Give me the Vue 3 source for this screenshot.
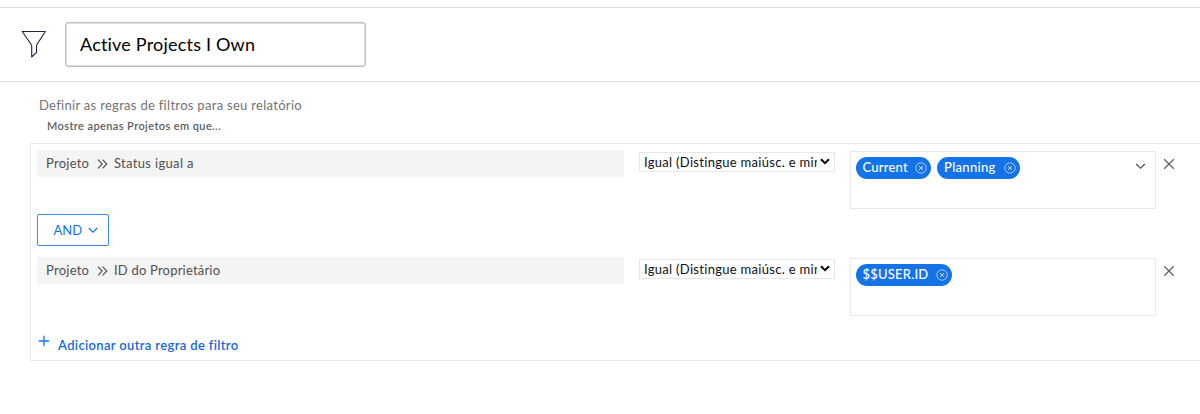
<script setup>
const rules = [
  { field: 'Status igual a', kind: 'status', values: [{ text: 'Current', kind: 'current' }, { text: 'Planning', kind: 'planning' }], menu: true },
  { field: 'ID do Proprietário', kind: 'owner', values: [{ text: '$$USER.ID', kind: 'user' }], menu: false },
]
</script>

<template>
  <main class="page">
    <header class="header">
      <svg class="funnel" width="26" height="29" viewBox="0 0 26 29">
        <path d="M1.2 1.5H24.3L15.5 15.3V22.4L10.7 27V15.3Z" fill="none" stroke="#22243a" stroke-width="1.1" stroke-linejoin="round" />
      </svg>
      <div class="name"><span class="t-name">Active Projects I Own</span></div>
    </header>

    <div class="intro"><span class="t-intro">Definir as regras de filtros para seu relatório</span></div>
    <div class="hint"><span class="t-hint">Mostre apenas Projetos em que...</span></div>

    <section class="panel">
      <template v-for="(rule, i) in rules" :key="rule.kind">
        <div class="rule">
          <div class="field">
            <span class="t-project">Projeto</span>
            <svg class="guillemet" width="11" height="10" viewBox="0 0 11 10">
              <path d="M1 .7L5.2 5L1 9.3M5.6 .7L9.8 5L5.6 9.3" fill="none" stroke="#505050" stroke-width="1.15" />
            </svg>
            <span :class="'t-' + rule.kind">{{ rule.field }}</span>
          </div>
          <div class="select">
            <div class="clip"><span class="t-select">Igual (Distingue maiúsc. e minúsc.)</span></div>
            <svg width="10" height="7" viewBox="0 0 10 7">
              <path d="M1 1.2L5 5.2L9 1.2" fill="none" stroke="#000" stroke-width="2" />
            </svg>
          </div>
          <div class="values">
            <div v-for="v in rule.values" :key="v.text" class="chip" :class="'chip-' + v.kind">
              <span :class="'t-' + v.kind">{{ v.text }}</span>
              <svg width="12" height="12" viewBox="0 0 12 12" fill="none" stroke="#fff">
                <circle cx="6" cy="6" r="5.2" stroke-width=".6" />
                <path d="M4 4L8 8M8 4L4 8" stroke-width=".8" />
              </svg>
            </div>
            <svg v-if="rule.menu" class="chevron" width="11" height="7" viewBox="0 0 11 7">
              <path d="M1.2 1L5.5 5.3L9.8 1" fill="none" stroke="#444" stroke-width="1.15" />
            </svg>
          </div>
          <svg class="remove" width="12" height="12" viewBox="0 0 12 12">
            <path d="M1.2 1.2L10.8 10.8M10.8 1.2L1.2 10.8" fill="none" stroke="#606060" stroke-width="1.25" />
          </svg>
        </div>
        <div v-if="i === 0" class="joiner">
          <span class="t-and">AND</span>
          <svg width="10" height="7" viewBox="0 0 10 7">
            <path d="M.8 1L5 5.2L9.2 1" fill="none" stroke="#1473e6" stroke-width="1.15" />
          </svg>
        </div>
      </template>
      <div class="add">
        <svg width="12" height="12" viewBox="0 0 12 12">
          <path d="M6 .8V11.2M.8 6H11.2" fill="none" stroke="#1473e6" stroke-width="1.3" />
        </svg>
        <span class="t-add">Adicionar outra regra de filtro</span>
      </div>
    </section>
  </main>
</template>

<style>
body { margin: 0; background: #fff; overflow: hidden; }
</style>

<style scoped>
.page { box-sizing: border-box; width: 1200px; height: 414px; padding-top: 7px; overflow: hidden; font-family: Lato, "Open Sans", sans-serif; font-size: 13px; color: #505050; }
.page * { box-sizing: border-box; }
span { white-space: nowrap; }
svg { display: block; flex: none; }
.header { height: 75px; border-top: 1px solid #dedede; border-bottom: 1px solid #dedede; display: flex; align-items: flex-start; padding: 14px 0 0 21px; }
.funnel { margin-top: 8px; }
.name { width: 301px; height: 45px; margin-left: 18px; border: 1px solid #bfbfc3; border-radius: 3px; box-shadow: inset 0 0 0 .5px #bfbfc3; padding-left: 14px; font-size: 18px; line-height: 43px; color: #000; }
.intro { margin: 13px 0 0 39px; height: 20px; line-height: 20px; color: #737373; }
.hint { margin: 2px 0 0 47px; height: 18px; line-height: 18px; font-size: 11px; font-weight: 600; color: #606060; }
.panel { width: 1180px; height: 218px; margin: 8px 0 0 30px; border: 1px solid #ebebeb; padding: 6px 0 0 6px; }
.rule { display: flex; align-items: flex-start; height: 59px; }
.field { width: 587px; height: 27px; background: #f4f4f4; border-radius: 1px; display: flex; align-items: center; padding-left: 9px; color: #505050; }
.field span { line-height: 16px; padding-bottom: 1px; }
.field .t-project { width: 43px; }
.guillemet { margin: 0 6px 0 8px; }
.select { width: 196px; height: 20px; margin: 2px 0 0 15px; border: 1px solid #e6e6e6; display: flex; align-items: center; color: #111; padding-left: 4px; }
.select svg { margin-bottom: 1px; }
.clip { width: 173px; overflow: hidden; margin-right: 3px; line-height: 18px; height: 18px; }
.values { position: relative; width: 306px; height: 58px; margin: 1px 0 0 15px; border: 1px solid #e9e9e9; padding: 5px 5px 5px 4.5px; display: flex; align-items: flex-start; gap: 6px; }
.chip { height: 22px; border-radius: 11px; background: #1473e6; color: #fff; display: flex; align-items: center; justify-content: space-between; padding: 0 4px 0 7px; }
.chip span { line-height: 20px; height: 22px; font-weight: 500; }
.chip-current { width: 75.5px; }
.chip-planning { width: 82.5px; }
.chip-user { width: 96.5px; }
.chevron { position: absolute; right: 9px; top: 11px; }
.remove { margin: 8px 0 0 7px; }
.joiner { width: 72px; height: 32px; margin: 5px 0 11px -.5px; border: 1px solid #3b8aea; border-radius: 2px; display: flex; align-items: center; padding-left: 16px; color: #1473e6; }
.joiner svg { margin-left: 6px; }
.joiner span { width: 28px; }
.add { display: flex; align-items: flex-start; margin: 19px 0 0 1px; color: #1767dc; font-weight: 600; }
.add span { margin-left: 8px; line-height: 20px; }
.t-name { letter-spacing: .2px; }
.t-intro { letter-spacing: .3px; }
.t-hint { letter-spacing: .4px; }
.t-project { letter-spacing: .25px; }
.t-status { letter-spacing: .33px; }
.t-owner { letter-spacing: .2px; }
.t-select { letter-spacing: .3px; }
.t-current { letter-spacing: .2px; }
.t-planning { letter-spacing: .3px; }
.t-user { letter-spacing: .2px; }
.t-add { letter-spacing: .35px; }
</style>
